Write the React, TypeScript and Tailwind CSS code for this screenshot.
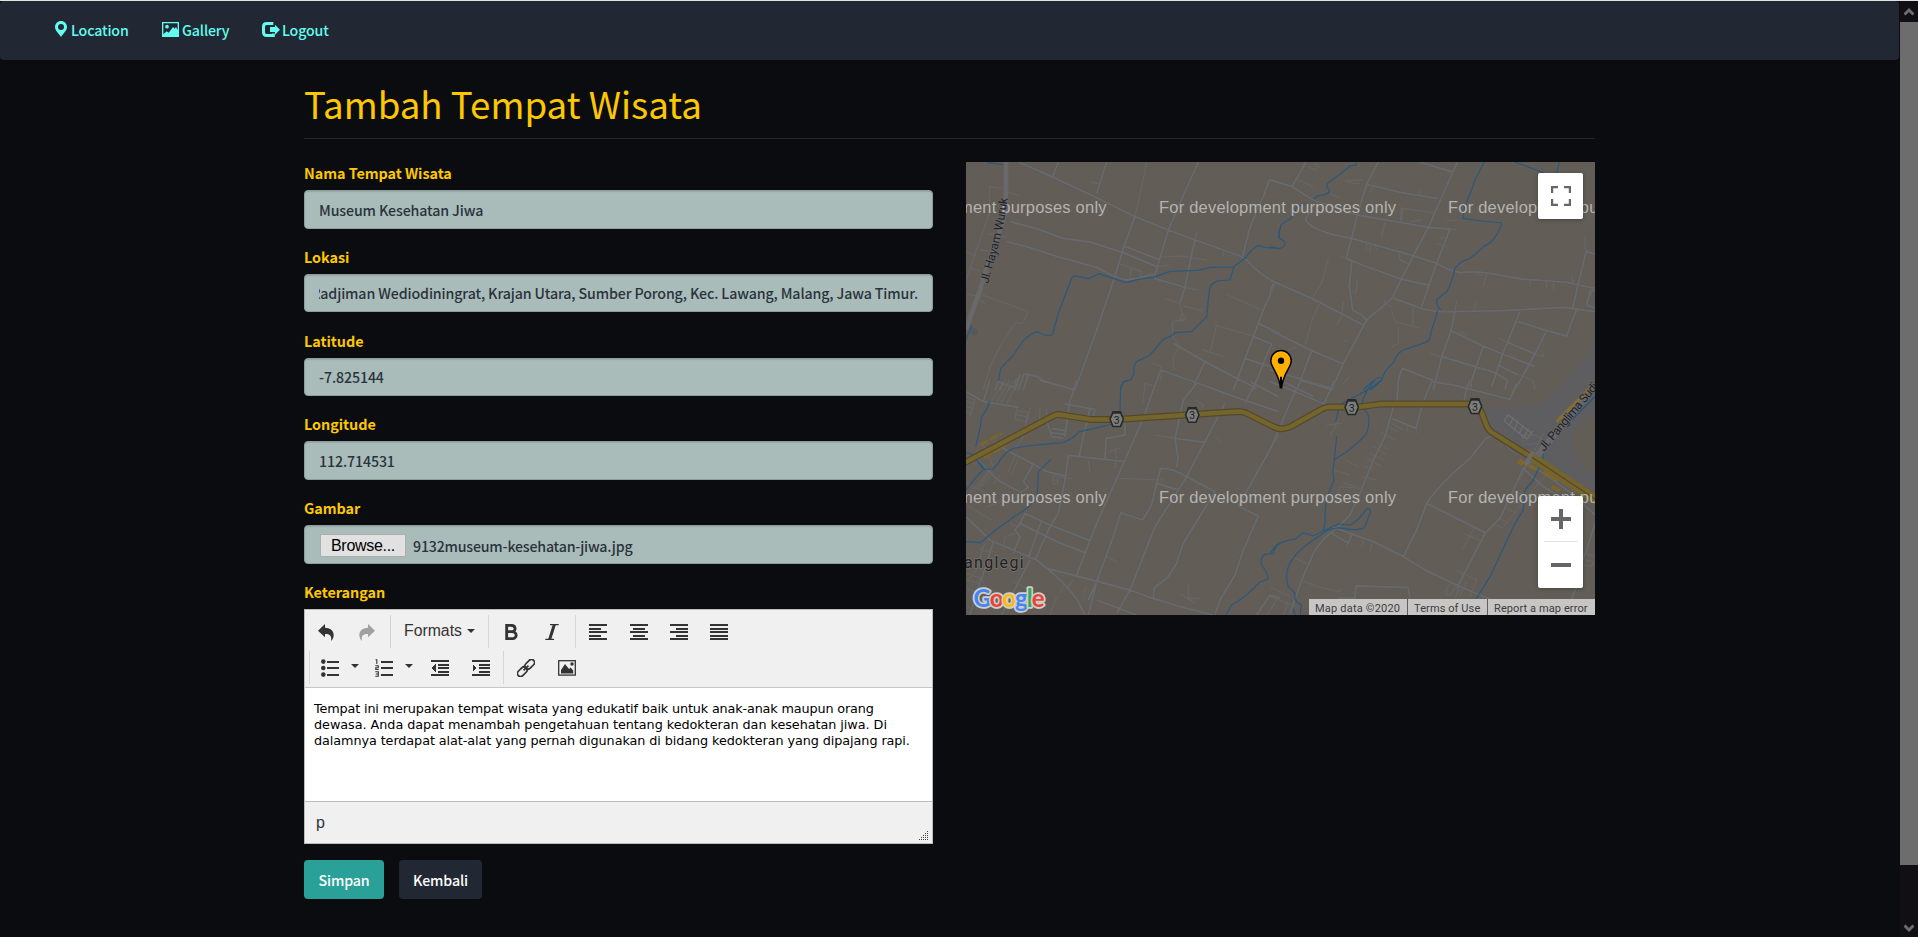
import React from "react";

const cjk = "font-['Noto_Sans_CJK_SC',sans-serif]";

/* ---------- navigation ---------- */

function MarkerIcon() {
  return (
    <svg width="12" height="16" viewBox="0 0 36 48" fill="currentColor" fillRule="evenodd">
      <path d="M18 0C8 0 0 8 0 18c0 11 10 18 18 30C26 36 36 29 36 18 36 8 28 0 18 0zm0 9a9 9 0 1 1 0 18 9 9 0 0 1 0-18z" />
    </svg>
  );
}

function PictureIcon() {
  return (
    <svg width="17" height="15" viewBox="0 0 51 45" fill="currentColor" fillRule="evenodd">
      <path d="M0 0h51v45H0zM4 4v33l10-9 6 4 13-17 5 5 4-5 5 9V4z" />
      <circle cx="15" cy="14" r="5.5" />
    </svg>
  );
}

function LogoutIcon() {
  return (
    <svg width="18" height="15" viewBox="0 0 54 45">
      <path d="M34 4.500H14q-9.500 0-9.500 9.500v17q0 9.500 9.500 9.500h20v-6" fill="none" stroke="currentColor" strokeWidth="9" />
      <path d="M24 15h15V8l15 15-15 15v-8H24z" fill="currentColor" />
    </svg>
  );
}

function NavBar() {
  return (
    <nav className="h-[59px] w-[1899px] rounded-[4px] bg-[#212833] pl-[55px] text-[#62fdf0]">
      <div className="flex h-[59px] items-center pb-[1px] text-[14.2px] font-medium leading-[20px] tracking-[-0.15px]">
        <a className="flex w-[107px] items-center">
          <span className="-mt-[2px] mr-[4px]"><MarkerIcon /></span>
          <span>Location</span>
        </a>
        <a className="flex w-[100px] items-center">
          <span className="-mt-[1px] mr-[3px]"><PictureIcon /></span>
          <span>Gallery</span>
        </a>
        <a className="flex items-center">
          <span className="-mt-[1px] mr-[2px]"><LogoutIcon /></span>
          <span>Logout</span>
        </a>
      </div>
    </nav>
  );
}

/* ---------- form ---------- */

function Field({ label, children }: { label: string; children: React.ReactNode }) {
  return (
    <div className="h-[83.8px]">
      <div className="h-[28px] pt-[1px] text-[14.4px] font-bold leading-[20px] tracking-[-0.05px] text-[#fdc800]">{label}</div>
      <div className="flex h-[38.6px] items-center overflow-hidden rounded-[4px] border border-[#8ba09e] bg-[#a9bcba] px-[14px] pt-[1px] text-[14.2px] font-medium leading-[20px] tracking-[-0.12px] text-[#2a333c] shadow-[inset_0_1px_1px_rgba(0,0,0,0.12)]">
        {children}
      </div>
    </div>
  );
}

/* ---------- editor toolbar ---------- */

function Caret() {
  return (
    <svg width="8" height="4" viewBox="0 0 8 4"><path d="M0 0h8L4 4z" fill="#333" /></svg>
  );
}

function Bars({ rows }: { rows: number[][] }) {
  return (
    <svg width="18" height="18" viewBox="0 0 18 18" fill="#333" shapeRendering="crispEdges">
      {rows.map(([x, y, w], i) => (
        <rect key={i} x={x} y={y} width={w} height="2" />
      ))}
    </svg>
  );
}

function Arrow({ flip }: { flip?: boolean }) {
  return (
    <svg width="16" height="17" viewBox="0 0 48 51" fill={flip ? "#a0a0a0" : "#333"}>
      <path transform={flip ? "translate(48 0) scale(-1 1)" : undefined} d="M0 20 21 0v11c17 1 26 9 26 22 0 8-3 14-8 18 3-14-3-22-18-21v10z" />
    </svg>
  );
}

function Cell({ children }: { children: React.ReactNode }) {
  return <span className="flex h-[33px] w-[40.4px] shrink-0 items-center justify-center pt-[2px]">{children}</span>;
}

function SplitCell({ children }: { children: React.ReactNode }) {
  return (
    <span className="flex h-[33px] w-[54px] shrink-0 items-center pl-[9px] pt-[2px]">
      {children}
      <span className="-mt-[4px] ml-[12px]"><Caret /></span>
    </span>
  );
}

const sep = "border-l border-[#d5d5d5]";

function Toolbar() {
  return (
    <div className="h-[78px] border-b border-[#c5c5c5] bg-[#f0f0f0] pt-[5px]">
      <div className="flex h-[33px]">
        <div className="flex w-[85px] pl-[1.3px]">
          <Cell><Arrow /></Cell>
          <Cell><Arrow flip /></Cell>
        </div>
        <div className={`${sep} flex w-[98px] items-center pl-[13px]`}>
          <span className="w-[63px] font-['Liberation_Sans',Arial,sans-serif] text-[15.8px] leading-[20px] text-[#333]">Formats</span>
          <span className="-mt-[1px]"><Caret /></span>
        </div>
        <div className={`${sep} flex w-[87px] pl-[2px]`}>
          <Cell>
            <svg width="13" height="16" viewBox="0 0 39 48">
              <path d="M5 4h13c16 0 16 19 2 19H6h14c18 0 18 21 0 21H5z" fill="none" stroke="#333" strokeWidth="8.500" />
            </svg>
          </Cell>
          <Cell>
            <svg width="14" height="16" viewBox="0 0 42 48" fill="none" stroke="#333">
              <path d="M15 2h26M1 46h26" strokeWidth="4" /><path d="M28 2 14 46" strokeWidth="9" />
            </svg>
          </Cell>
        </div>
        <div className={`${sep} flex pl-[2px]`}>
          <Cell><Bars rows={[[0, 1, 18], [0, 5, 12], [0, 8, 18], [0, 12, 12], [0, 15, 18]]} /></Cell>
          <Cell><Bars rows={[[0, 1, 18], [3, 5, 12], [0, 8, 18], [3, 12, 12], [0, 15, 18]]} /></Cell>
          <Cell><Bars rows={[[0, 1, 18], [6, 5, 12], [0, 8, 18], [6, 12, 12], [0, 15, 18]]} /></Cell>
          <Cell><Bars rows={[[0, 1, 18], [0, 5, 18], [0, 8, 18], [0, 12, 18], [0, 15, 18]]} /></Cell>
        </div>
      </div>
      <div className="mt-[3px] flex h-[33px] pl-[4px]">
        <div className={`${sep} flex w-[194px] pl-[2px]`}>
          <SplitCell>
            <svg width="18" height="18" viewBox="0 0 18 18" fill="#333">
              <circle cx="2.3" cy="2.6" r="2.3" /><circle cx="2.3" cy="9" r="2.3" /><circle cx="2.3" cy="15.6" r="2.3" />
              <path d="M6 2h12v2H6zM6 8h12v2H6zM6 15h12v2H6z" />
            </svg>
          </SplitCell>
          <SplitCell>
            <svg width="18" height="18" viewBox="0 0 18 18">
              <path d="M6 2h12v2H6zM6 8h12v2H6zM6 15h12v2H6z" fill="#333" />
              <path d="M.5.8h1.3V5M.3 6.8h3v2H.8v1.7h2.9M.3 12.8h3v4.5h-3M.8 15h2.5" fill="none" stroke="#333" strokeWidth="1.1" />
            </svg>
          </SplitCell>
          <Cell>
            <svg width="18" height="18" viewBox="0 0 18 18" fill="#333" shapeRendering="crispEdges">
              <path d="M0 1h18v2H0zM7 5h11v2H7zM7 8h11v2H7zM7 12h11v2H7zM0 15h18v2H0zM5 5v8L.5 9z" />
            </svg>
          </Cell>
          <Cell>
            <svg width="18" height="18" viewBox="0 0 18 18" fill="#333" shapeRendering="crispEdges">
              <path d="M0 1h18v2H0zM7 5h11v2H7zM7 8h11v2H7zM7 12h11v2H7zM0 15h18v2H0zM.5 5v8L5 9z" />
            </svg>
          </Cell>
        </div>
        <div className={`${sep} flex pl-[2px]`}>
          <Cell>
            <svg width="18" height="18" viewBox="0 0 18 18" fill="none" stroke="#333" strokeWidth="1.7">
              <g transform="rotate(-45 9 9)">
                <rect x="-1.8" y="5.9" width="11" height="6.2" rx="3.1" />
                <rect x="8.8" y="5.9" width="11" height="6.2" rx="3.1" />
                <path d="M5.5 9h7" />
              </g>
            </svg>
          </Cell>
          <Cell>
            <svg width="18" height="16" viewBox="0 0 18 16">
              <rect x=".7" y=".7" width="16.6" height="14.4" fill="none" stroke="#333" strokeWidth="1.3" />
              <path d="M3 13.5V10l4-6 4 5 1.6-1.5 2.6 3v3z" fill="#333" /><circle cx="14" cy="4" r="1.7" fill="#333" />
            </svg>
          </Cell>
        </div>
      </div>
    </div>
  );
}

function Grip() {
  const dots: number[][] = [];
  for (let r = 0; r < 5; r++) for (let c = 4 - r; c < 5; c++) dots.push([c * 2, 1 + r * 2]);
  return (
    <svg width="11" height="11" viewBox="0 0 11 11" fill="#444" shapeRendering="crispEdges">
      {dots.map(([x, y], i) => <rect key={i} x={x + 1} y={y} width="1" height="1" />)}
    </svg>
  );
}

function Editor() {
  return (
    <div className="h-[235px] border border-[#bcbcbc] bg-white">
      <Toolbar />
      <div className="h-[113px] px-[9px] pt-[13px] font-['DejaVu_Sans',Verdana,sans-serif] text-[12.8px] leading-[16px] text-black">
        <p className="w-[600px] whitespace-nowrap">
          <span className="tracking-[-0.15px]">Tempat ini merupakan tempat wisata yang edukatif baik untuk anak-anak maupun orang</span><br />
          <span className="tracking-[-0.05px]">dewasa. Anda dapat menambah pengetahuan tentang kedokteran dan kesehatan jiwa. Di</span><br />
          <span className="tracking-[-0.085px]">dalamnya terdapat alat-alat yang pernah digunakan di bidang kedokteran yang dipajang rapi.</span>
        </p>
      </div>
      <div className="flex h-[42px] items-end justify-between border-t border-[#bcbcbc] bg-[#f0f0f0] pl-[11px] pr-[3px]">
        <span className="pb-[10px] font-['Liberation_Sans',Arial,sans-serif] text-[16px] leading-[20px] text-[#333]">p</span>
        <span className="pb-[2px]"><Grip /></span>
      </div>
    </div>
  );
}

/* ---------- map ---------- */

const NW_MAJOR =
  "M168 36L168 110L165 190L140 270L105 370L90 420L65 490L48 540";
const NW_ROADS = [
  "M205 36L305 80L430 138L555 200L655 240L735 270L870 318L890 330Q940 385 990 402",
  "M555 200L522 288L493 385L440 540L375 720",
  "M745 36L705 125L655 240L612 385",
  "M170 275L230 290L330 322L440 352L490 378L525 390L560 385L610 372",
  "M180 215L260 236L340 265L420 276L520 308L620 350",
  "M522 288L625 328M735 270L718 345L705 412L690 460M612 385L705 412",
  "M990 98L958 90L940 140Q900 220 890 270L878 318",
  "M975 402L940 480L910 560L880 640L850 720M925 520L990 550M910 560L965 582L940 640L910 720M885 625L990 660",
  "M765 635L730 710M670 580L765 635L850 680L920 715M632 660L765 708M632 660L610 720M325 36L308 80M440 130L470 36",
];
const NW_THIN = [
  "M590 36L575 110L555 200M420 95L445 102M120 110L155 115M120 110L118 190L48 390M48 305L80 318M90 300L150 308M60 355L90 362M48 432L85 438",
  "M90 432L235 485L218 520L195 518L150 590L120 650L100 720M90 450L105 460M170 125L210 138M110 250L170 262",
  "M505 340L575 365L570 380M545 355L540 380M625 350L655 345M735 270L740 245M820 300L820 320M690 318L770 330M705 412L745 420M625 322L690 318",
  "M690 460L700 510L668 515L668 560L690 590L670 620L672 660M700 468L755 482L758 475M645 445L690 460M828 432L935 480M800 525L780 610M795 525L880 550L910 560M755 598L820 620M605 638L635 650L632 690M690 510Q695 480 706 500Q706 520 690 510",
];
const NW_BLUE = [
  "M112 38L160 44",
  "M145 695L152 655L190 615L220 572Q245 548 262 545Q300 565 308 552L325 490L365 385Q370 373 385 380L415 386L447 371L490 385L530 398L565 388L610 382L660 364L740 361L785 352L850 351L885 325Q912 290 925 287L945 292L990 296",
  "M852 351L840 390L805 392Q780 400 778 420L770 500L725 545L675 548L660 560L640 568L600 615L560 635Q550 645 552 670L542 690L520 695L510 720M990 235Q982 255 990 265M48 570L65 525",
];

const NE_ROADS = [
  "M108 36L66 110M0 90L66 110L130 150L260 195L360 212L475 232L540 237L500 340L455 470",
  "M325 36L290 103L262 195L245 265L228 325M130 180Q105 200 108 212Q130 245 245 265L375 302L430 317L500 340Q530 360 570 368Q620 362 660 370L755 387L890 397L975 415",
  "M450 36L548 66M562 36L475 232L430 317L365 445L290 510L220 640L185 720M290 103L395 128L505 146",
  "M228 325L285 348L395 388L475 405M370 445L455 475Q480 485 550 485L700 482L880 472L975 485",
  "M245 335L238 410L248 480L275 495L290 512M0 390L125 445L280 525M13 395L0 425M0 540L125 602L220 642M125 602L80 720M0 660L95 688L190 715",
  "M555 485L543 542L515 620L490 720M543 542L640 588L698 612L795 650M515 620L600 645L675 668M640 588L605 690L600 720M750 485L698 612L665 710M745 515L830 542L890 558L920 478M830 542L795 612L735 720M715 578L795 612M685 645L745 675M675 668L712 690L705 720M398 655L490 692M398 655Q382 680 385 720",
  "M950 300L930 380L908 475M950 305L975 312M975 420L960 425L950 465L975 475",
];
const NE_THIN = [
  "M130 40L147 48L140 60L115 52M85 90L130 110M280 90L225 92M300 128L315 100M448 120L452 136M395 215L398 175L490 188M395 170L390 215M420 215L455 210M540 237L560 240M530 212L560 210M345 215L335 262M290 280L288 305M315 280L320 300M392 302L387 325L415 342L390 330M500 280L530 290M510 265L525 262",
  "M175 325L155 400L125 445M150 460L130 500L105 585M262 390L258 430L240 420L238 415M220 455L215 500L200 525M365 470L350 460M365 480L375 515L450 535M430 470L428 525M385 530L385 580L365 590M560 450L555 485M615 455L615 480M650 370L640 410M640 375L620 375M780 390L780 410M830 393L830 415M850 395L850 420M945 260L945 300M905 375L910 400M960 415L965 440M235 575L220 570M55 600L80 590M345 450L335 480M480 610L510 620M572 545L590 555M685 565L715 578M795 612L820 620L815 600M720 610L750 635",
  "M300 280L300 310M210 315L228 325M180 130L210 145M230 96L270 102M750 675L790 692L795 720M240 680L215 705",
];
const NE_BLUE = [
  "M258 38L258 45L240 48Q215 70 175 98Q165 108 178 122Q180 128 160 135L145 137L130 147M105 160L95 165L80 172L60 208L35 222Q27 240 27 265Q48 272 45 285Q35 300 15 293L0 290",
  "M643 36Q618 80 610 105L585 170L578 205L635 213L695 219Q693 235 675 262Q665 278 640 290Q610 320 595 328Q575 330 555 355L550 375Q540 410 530 425Q510 440 502 448Q495 460 512 480M503 480L500 495L483 545Q485 570 465 578L400 600Q380 610 372 635L345 665L335 690Q310 715 300 720M338 684Q322 675 280 720",
  "M735 36L820 68M868 36L860 70",
];

const SW_ROADS = [
  "M380 0L358 70L345 170M270 0L370 28M48 35L100 65L205 82M100 65L120 0M345 72L435 88L430 110M420 85L400 170L388 228",
  "M620 0L582 110L525 240L440 430L380 585M525 245L355 226L345 300L325 400L300 440L255 540M525 165L468 175L465 235M525 110L525 165",
  "M825 70L765 185L710 290L685 330L615 440L540 630L500 700M675 175L765 187M740 10L700 60L675 175L684 235L680 262M720 0L825 40L985 95M920 0L885 70M900 5L985 50",
  "M985 165L865 378L925 408L880 510L855 585L810 660L795 705M632 265Q670 265 710 290L795 335L700 490L680 550L655 590L612 625L610 655L690 680L790 705",
  "M632 265L620 310L605 375L578 420L512 398L490 470L440 605L415 705M620 310L685 330",
  "M150 200L245 250L290 275L345 288M80 235Q120 280 150 305L210 335M248 255L220 305L235 322L210 338M48 410L120 480L130 485L260 540L290 565L380 588L540 630L620 660",
  "M225 400L300 435L420 482M210 430L320 485L405 518M420 480L405 520M210 430L195 450L210 470L190 520M225 400L210 430M275 420L235 535M260 540Q350 610 385 665L405 705M130 485L60 705M240 540L155 705M440 605L415 660M440 660L560 705M510 685L500 700M960 645L920 705M960 645L990 655",
  "M290 120L305 170L340 175M305 145L345 152M300 158L345 163",
];
const SW_THIN = [
  "M165 0L125 62M178 0L140 68M190 0L152 72M205 0L170 72M48 50L75 60L60 110M48 65L70 70M48 80L68 85M48 95L65 100M200 82L195 118L228 125L232 95L198 92M196 104L230 110M242 82L215 180L190 210M270 80L268 140M290 90L290 140M320 100L320 120",
  "M100 195L130 260L80 330M200 215L175 275M205 235L185 285M120 270L60 340M130 275L95 320M150 285L130 315M48 310L90 330L150 370M48 350L75 365M48 375L125 420M140 370L110 380M310 285L325 290L322 312L308 310L310 285M308 298L324 302M330 290L368 297M415 240L420 280M495 200L500 240M480 215L510 205M498 240L495 265M505 295L640 300",
  "M615 165L675 175M800 170L815 190M735 60L760 75L755 85M585 10L578 70M585 10L620 20M180 430L210 440M195 460L165 470L160 510M110 490L90 510L130 515M100 500L80 570L55 600M470 530L500 545M370 600L355 620M320 650L300 705M340 620L330 640M90 590L75 660M48 580L95 595L120 650M48 600L90 610M95 620L140 635M48 625L110 650M190 605L260 640L250 690M410 620L400 640M715 615L715 660M710 655L750 655M690 640L735 670M975 670L950 705",
];
const SW_BLUE = [
  "M118 65Q115 85 95 110L90 145L77 200M510 95L512 20Q515 5 540 0M488 132L420 148L388 155Q375 172 340 188L280 193L230 198L190 205Q160 220 145 250L128 267L100 268L80 240M48 218L65 222L80 238L103 265L80 290L48 330M303 238L265 275L262 345Q245 380 200 405L150 440L115 468L92 488L48 485",
  "M990 488Q975 498 970 520L945 523Q925 540 938 560Q960 590 952 598Q940 605 930 605Q890 650 845 675L828 705",
];

const SE_ROADS = [
  "M95 0L75 35L0 210M30 0L130 50M0 5L75 35L170 75M195 0L155 85M90 0L190 30M385 0L380 72M485 5L470 40L455 78M485 5L550 15L590 25L580 70M600 0L590 25L720 58L740 10M370 80L345 170L310 240L270 340L240 405L205 440Q150 480 130 520L95 600L60 700M365 115L438 145L455 80",
  "M815 205L790 240L760 265L735 320L690 415L645 460L560 625M680 170Q650 165 640 185L600 235Q510 310 470 370L440 450L400 530M470 370L645 458M185 440L240 460L310 485L400 530L475 575L560 615L640 650L680 665M185 460L235 490L245 465",
  "M775 250L850 300L910 345L975 405M760 265L820 320L870 350M920 620L885 705M975 430L950 510L915 600M205 705L205 655L255 655L258 618L415 622L420 655",
];
const SE_THIN = [
  "M355 125L400 150M350 140L385 155M330 155L375 180M320 185L355 210M310 200L350 225M300 220L340 240M290 235L335 260M280 260L310 265M275 290L320 300M260 320L220 310M270 325L210 320L200 350M240 285L190 270M225 240L265 260M205 120L180 170M215 130L170 135M440 145L440 160M415 130L410 155M210 70L210 100",
  "M820 160L750 300M840 270L790 330L700 440M735 335L765 345M725 360L750 370M710 385L740 400M690 415L715 430M665 430L700 445M615 440L575 510M580 460L640 485M280 480L275 500M305 490L300 520M235 480L230 500M65 530L115 553M95 600L140 620L210 635L215 625M0 650L80 680M20 660L0 690M55 665L40 705M0 620L60 650M555 570L620 600L600 650M580 575L560 640M590 605L570 650M540 610Q525 630 530 645Q545 650 555 620Q550 605 540 610M575 620L555 655M940 520L975 530M945 540L970 545L965 560L940 555M690 180L740 225M700 190L690 200M755 165L800 165L830 195M755 165L760 195L805 190",
];
const SE_BLUE = [
  "M335 0Q290 35 215 70Q205 90 197 125M315 0Q285 30 275 75L295 105Q300 130 290 160Q270 185 230 215L195 238M200 168L193 240L188 275L192 300L170 355L165 400L165 430L158 455",
  "M0 520L20 495Q45 480 75 478L100 458L130 468L155 455L205 432L240 435Q270 420 290 385Q305 385 300 400L285 440Q275 452 240 448L205 443L175 450L130 480Q70 520 55 560Q45 590 55 620L75 640Q70 665 95 675Q90 695 92 705M75 705L70 685",
  "M820 215L818 240L790 300L765 330L760 390L735 430L660 590L610 670M975 50L905 120",
];

function Layer({ t, roads, thin, blue }: { t: string; roads: string[]; thin: string[]; blue: string[] }) {
  return (
    <g transform={t} fill="none" strokeLinejoin="round">
      <path d={thin.join("")} stroke="#67676a" strokeWidth="3" />
      <path d={roads.join("")} stroke="#59575a" strokeWidth="8" opacity="0.5" />
      <path d={roads.join("")} stroke="#68696c" strokeWidth="5.5" />
      <path d={blue.join("")} stroke="#2b587c" strokeWidth="3.6" />
    </g>
  );
}

function Shield({ x, y }: { x: number; y: number }) {
  return (
    <g transform={`translate(${x} ${y})`}>
      <path d="M-3.700-7.200h7.400l3 7.200-3 7.200h-7.400l-3-7.200z" fill="#7d7d7d" stroke="#26282a" strokeWidth="1.600" strokeLinejoin="round" />
      <path d="M-4.5-6.800h9" stroke="#26282a" strokeWidth="2.400" />
      <text x="0" y="4.4" textAnchor="middle" fontFamily="Roboto, sans-serif" fontSize="10.500" fill="#1c1d1f">3</text>
    </g>
  );
}

function MapDrawing() {
  const nw = "translate(-16 -12) scale(0.33333)";
  const ne = "translate(304 -12) scale(0.33333)";
  const sw = "translate(-16 218) scale(0.33333)";
  const se = "translate(304 218) scale(0.33333)";
  const highway = "M-2 301L88 253.500Q90 252.500 93 252.500L125 257.500L151 257.500L272 249.500Q276 249.500 280 251L307 264.500Q315 269 325 264.500L355 247.500Q359 245 364 245L392 245L416 242L505 242Q511 242 515 249L520 262Q522 269 530 273L570 298L632 338";
  const wm = (x: number, y: number) => (
    <text x={x} y={y} textLength="237" lengthAdjust="spacing" fontFamily="Liberation Sans, Arial, sans-serif" fontSize="16.500" fill="#b4b3b0">
      For development purposes only
    </text>
  );
  return (
    <svg width="629" height="453" viewBox="0 0 629 453" className="block">
      <rect width="629" height="453" fill="#625e57" />
      <path d="M629 180Q600 225 580 238Q560 248 525 245L514 246L522 262L545 284L570 298L629 336z" fill="#5e5e60" />
      <path d="M629 252Q606 265 605 280Q606 300 629 312z" fill="#625e57" />
      <path d="M5 165l7 3-2 6-7-3z" fill="#55585b" />
      <Layer t={nw} roads={NW_ROADS} thin={NW_THIN} blue={NW_BLUE} />
      <Layer t={ne} roads={NE_ROADS} thin={NE_THIN} blue={NE_BLUE} />
      <Layer t={sw} roads={SW_ROADS} thin={SW_THIN} blue={SW_BLUE} />
      <Layer t={se} roads={SE_ROADS} thin={SE_THIN} blue={SE_BLUE} />
      <g transform={nw} fill="none" stroke="#69696b">
        <path d={NW_MAJOR} strokeWidth="14" />
        <path d="M135 720L145 695L190 712L200 685M150 720L158 700M175 720L185 705M195 720L210 675M205 720L222 672L235 672L220 720M222 672L265 680L275 692L375 720" strokeWidth="5" />
      </g>
      <g transform={se} fill="none">
        <path d="M795 235L975 15" stroke="#69696b" strokeWidth="20" />
        <path d="M715 105L785 160M702 122L770 178M715 105L702 122M730 112L718 138M745 122L733 150M760 135L748 160M775 145L763 170M790 152L770 178" stroke="#6e6e71" strokeWidth="4" />
        <path d="M860 125L975 10" stroke="#84702c" strokeWidth="9" />
        <path d="M905 120L975 50" stroke="#2b587c" strokeWidth="4" />
        <path d="M750 235l15 8-10 15-15-8zM770 207l22 12-6 8-22-12zM770 250l30 12-4 10-30-14zM810 235l40 24-4 6-40-24zM825 270l42 26-6 10-42-26zM848 315l24 14-6 8-24-12z" fill="#7c662a" />
      </g>
      <path d="M14 283L36 271M18 296L40 283" stroke="#7a6428" strokeWidth="3" strokeDasharray="9 2" />
      <path d={highway} fill="none" stroke="#55482a" strokeWidth="6.800" />
      <path d={highway} fill="none" stroke="#74652c" strokeWidth="4.400" />
      <path d="M564 294L632 339" stroke="#74652c" strokeWidth="9" />
      <path d="M564 294L632 339" stroke="#55482a" strokeWidth="1.200" />
      <g stroke="#6b6b6d" strokeWidth="4"><path d="M559 303l8-13" /></g>

      {wm(-96.5, 51)}{wm(193, 51)}{wm(482, 51)}
      {wm(-96.5, 341)}{wm(193, 341)}{wm(482, 341)}

      <path id="hayam" d="M22 122L32.500 84Q39 58 42.500 30L43 10" fill="none" />
      <g fontFamily="Roboto, sans-serif" fill="#202225">
        <text fontSize="12" stroke="#69696b" strokeWidth="1" paintOrder="stroke">
          <textPath href="#hayam" textLength="88">Jl. Hayam Wuruk</textPath>
        </text>
        <text transform="translate(578 290) rotate(-50)" fontSize="12" letterSpacing="-0.45" stroke="#69696b" strokeWidth="1" paintOrder="stroke">Jl. Panglima Sudirman</text>
        <text x="-2" y="405.500" fontSize="16" letterSpacing="1.3" stroke="#77736c" strokeWidth="1.500" paintOrder="stroke">anglegi</text>
      </g>

      <Shield x={150.700} y={257.300} />
      <Shield x={226.300} y={253} />
      <Shield x={385.700} y={245.300} />
      <Shield x={509} y={244.300} />

      <g transform="translate(315 198.700)">
        <path d="M0-10.200A10.200 10.200 0 0 0-10.200 0C-10.200 7-2 12-.600 27H.600C2 12 10.200 7 10.200 0A10.200 10.200 0 0 0 0-10.200z" fill="#ffb000" stroke="#000" strokeWidth="1.500" />
        <circle r="3.200" fill="#000" /><path d="M0 16v11" stroke="#000" strokeWidth="2" />
      </g>

      <text x="7.500" y="445" textLength="71" fontFamily="Lato, sans-serif" fontWeight="700" fontSize="24" stroke="#cfcecc" strokeWidth="3.500" strokeLinejoin="round" paintOrder="stroke">
        <tspan fill="#4285f4">G</tspan><tspan fill="#ea4335">o</tspan><tspan fill="#fbbc05">o</tspan><tspan fill="#4285f4">g</tspan><tspan fill="#34a853">l</tspan><tspan fill="#ea4335">e</tspan>
      </text>
    </svg>
  );
}

function MapPanel() {
  return (
    <div className="relative h-[453px] w-[629px] overflow-hidden">
      <MapDrawing />
      <div className="absolute right-[12px] top-[11px] flex h-[46px] w-[45px] items-center justify-center rounded-[2px] bg-white shadow-[0_1px_4px_rgba(0,0,0,0.3)]">
        <svg width="20" height="20" viewBox="0 0 20 20" fill="none" stroke="#666" strokeWidth="2.200">
          <path d="M1.100 7V1.100H7M13 1.100h5.900V7M18.900 13v5.900H13M7 18.900H1.100V13" />
        </svg>
      </div>
      <div className="absolute right-[12px] top-[334px] flex h-[92px] w-[45px] flex-col items-center rounded-[2px] bg-white shadow-[0_1px_4px_rgba(0,0,0,0.3)]">
        <span className="flex h-[45px] items-center">
          <svg width="20" height="20" viewBox="0 0 20 20" fill="#666"><path d="M8 0h4v8h8v4h-8v8H8v-8H0V8h8z" /></svg>
        </span>
        <span className="h-px w-[34px] bg-[#e6e6e6]" />
        <span className="flex h-[46px] items-center">
          <svg width="20" height="4" viewBox="0 0 20 4" fill="#666"><path d="M0 0h20v4H0z" /></svg>
        </span>
      </div>
      <div className="absolute bottom-0 right-0 flex h-[16px] w-[286px] gap-px font-[Roboto,sans-serif] text-[11px] leading-[19px] text-[#3c3c3c]">
        <span className="h-[16px] w-[98px] overflow-hidden whitespace-nowrap bg-[#c7c6c4] pl-[6px] tracking-[0.2px]">Map data ©2020</span>
        <span className="h-[16px] w-[79px] overflow-hidden whitespace-nowrap bg-[#c7c6c4] pl-[6px] tracking-[0.1px]">Terms of Use</span>
        <span className="h-[16px] flex-1 overflow-hidden whitespace-nowrap bg-[#c7c6c4] pl-[6px] tracking-[0.1px]">Report a map error</span>
      </div>
    </div>
  );
}

/* ---------- scrollbar ---------- */

function Scrollbar() {
  return (
    <div className="flex h-[936px] w-[18px] shrink-0 flex-col items-center bg-[#110f14]">
      <span className="flex h-[21px] items-center">
        <svg width="10" height="9" viewBox="0 0 10 9"><path d="M.5 7.500 5 3l4.500 4.500" fill="none" stroke="#6d6d6e" strokeWidth="3" /></svg>
      </span>
      <span className="h-[843px] w-full bg-[#6d6d6e]" />
      <span className="mt-auto flex h-[17px] items-center pb-px">
        <svg width="10" height="9" viewBox="0 0 10 9"><path d="M.5 1.500 5 6l4.500-4.500" fill="none" stroke="#6d6d6e" strokeWidth="3" /></svg>
      </span>
    </div>
  );
}

export default function App() {
  return (
    <div className={`${cjk} h-[937px] w-[1918px] overflow-hidden bg-[#0b0c10]`}>
      <div className="h-px bg-[#dfe3e0]" />
      <div className="flex h-[936px]">
        <div className="w-[1900px]">
          <NavBar />
          <main className="ml-[304px] w-[1291px]">
            <div className="flex h-[79px] items-center border-b border-[#1e2630] pt-[8px]">
              <h1 className="whitespace-nowrap text-[36.7px] font-normal leading-[50px] text-[#fdc800]">Tambah Tempat Wisata</h1>
            </div>
            <div className="flex justify-between pt-[23px]">
              <div className="w-[629px]">
                <Field label="Nama Tempat Wisata"><span>Museum Kesehatan Jiwa</span></Field>
                <Field label="Lokasi">
                  <span className="-mt-[1px] flex w-full justify-end overflow-hidden whitespace-nowrap">
                    <span>Radjiman Wediodiningrat, Krajan Utara, Sumber Porong, Kec. Lawang, Malang, Jawa Timur.</span>
                  </span>
                </Field>
                <Field label="Latitude"><span>-7.825144</span></Field>
                <Field label="Longitude"><span>112.714531</span></Field>
                <Field label="Gambar">
                  <span className="ml-[1px] mt-[1px] flex h-[23px] w-[86px] shrink-0 items-center justify-center border border-[#adadad] bg-[#e1e1e1] pt-[1px] font-['Liberation_Sans',Arial,sans-serif] text-[16px] font-normal tracking-[-0.3px] text-black">Browse...</span>
                  <span className="ml-[7px] mt-[2px] tracking-[-0.2px]">9132museum-kesehatan-jiwa.jpg</span>
                </Field>
                <div className="h-[28px] pt-[1px] text-[14.4px] font-bold leading-[20px] tracking-[-0.05px] text-[#fdc800]">Keterangan</div>
                <Editor />
                <div className="mt-[16px] flex gap-[15px] text-[14.2px] font-medium leading-[20px] tracking-[-0.12px] text-white">
                  <button className="h-[39px] w-[80px] rounded-[4px] bg-[#2aa198] pt-[2px]">Simpan</button>
                  <button className="h-[39px] w-[83px] rounded-[4px] bg-[#212833] pt-[2px]">Kembali</button>
                </div>
              </div>
              <MapPanel />
            </div>
          </main>
        </div>
        <Scrollbar />
      </div>
    </div>
  );
}
